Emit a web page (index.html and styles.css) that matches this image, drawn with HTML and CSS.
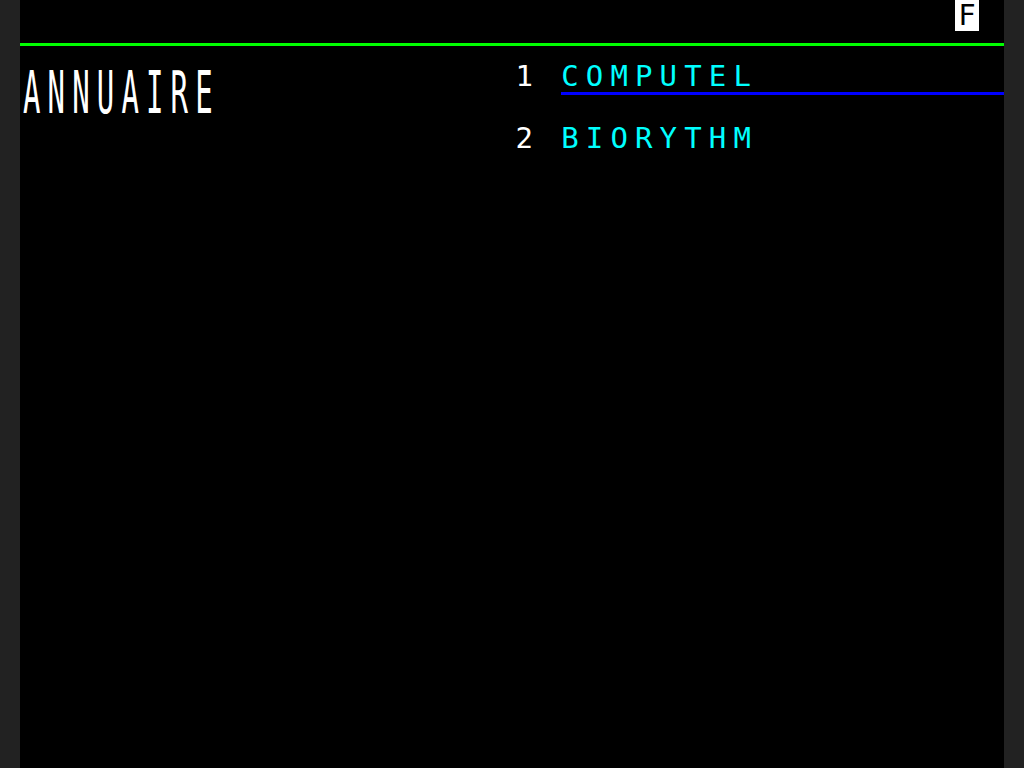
FILE: index.html
```html
<!DOCTYPE html>
<html lang="fr">
<head>
<meta charset="utf-8">
<title>Minitel - Annuaire</title>
<link rel="stylesheet" href="styles.css">
</head>
<body>
<main class="screen">
  <div class="status">F</div>
  <div class="rule-green"></div>
  <h1 class="title">ANNUAIRE</h1>
  <div class="num num-1">1</div>
  <div class="item item-1">COMPUTEL</div>
  <div class="rule-blue"></div>
  <div class="num num-2">2</div>
  <div class="item item-2">BIORYTHM</div>
</main>
</body>
</html>
```
FILE: styles.css
```css
html, body {
  margin: 0;
  padding: 0;
  background: #222222;
  height: 100%;
  overflow: hidden;
}

.screen {
  width: 984px;
  height: 768px;
  margin: 0 auto;
  background: #000000;
  display: grid;
  grid-template-columns: repeat(40, 1fr);
  grid-template-rows: repeat(25, 1fr);
  font-family: "DejaVu Sans Mono", "Liberation Mono", monospace;
  font-size: 29px;
  line-height: 30px;
  color: #ffffff;
}

.status {
  grid-column: 39;
  grid-row: 1;
  background: #ffffff;
  color: #000000;
  text-align: center;
}

.rule-green {
  grid-column: 1 / -1;
  grid-row: 2;
  height: 3px;
  margin-top: 12px;
  background: #00ff00;
}

.title {
  grid-column: 1 / span 8;
  grid-row: 3;
  margin: 0;
  padding-left: 3px;
  padding-top: 1px;
  font-size: 29px;
  font-weight: normal;
  letter-spacing: 7.14px;
  transform: scaleY(2);
  transform-origin: 0 0;
  white-space: nowrap;
}

.num {
  grid-column: 21;
  text-align: center;
}

.num-1 { grid-row: 3; }
.num-2 { grid-row: 5; }

.item {
  grid-column: 23 / span 8;
  color: #00ffff;
  letter-spacing: 7.14px;
  white-space: nowrap;
}

.item-1 { grid-row: 3; }
.item-2 { grid-row: 5; }

.rule-blue {
  grid-column: 23 / -1;
  grid-row: 4;
  height: 3px;
  background: #0000ff;
}
```
